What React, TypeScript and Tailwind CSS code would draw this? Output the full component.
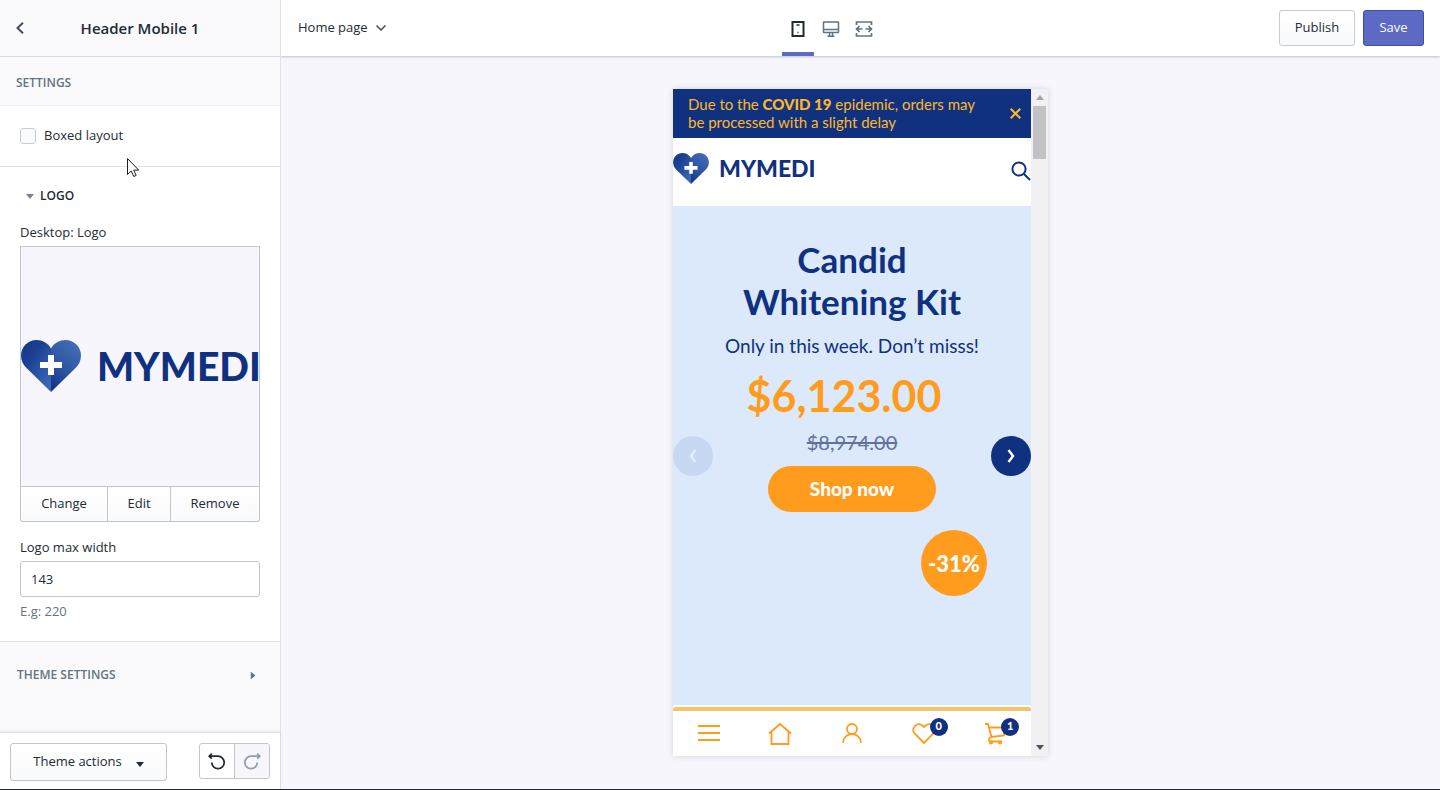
import type { ReactNode } from "react";
import { useState } from "react";
import { clsx } from "clsx";

function HeartMark({ id, className }: { id: string; className: string }) {
  return (
    <svg viewBox="0 0 60 52" className={className} aria-hidden="true">
      <defs>
        <linearGradient id={`${id}-left`} x1="0" y1="0" x2="0.8" y2="1">
          <stop offset="0" stopColor="#123687" />
          <stop offset="0.35" stopColor="#1b4092" />
          <stop offset="1" stopColor="#3d67b8" />
        </linearGradient>
        <linearGradient id={`${id}-right`} x1="0.7" y1="0" x2="0.2" y2="1">
          <stop offset="0" stopColor="#456db5" />
          <stop offset="0.6" stopColor="#2a529f" />
          <stop offset="1" stopColor="#123687" />
        </linearGradient>
      </defs>
      <path d="M30 52V8.5C27 3 21.5 0 15.5 0 7 0 0 7 0 15.5c0 5 2 9 5 12z" fill={`url(#${id}-left)`} />
      <path d="M30 52V8.5C33 3 38.5 0 44.5 0 53 0 60 7 60 15.5c0 5-2 9-5 12z" fill={`url(#${id}-right)`} />
      <path d="M27 15h6v7h8v6h-8v7h-6v-7h-8v-6h8z" fill="#fff" />
    </svg>
  );
}

function PhoneIcon() {
  return (
    <svg width="14" height="18" viewBox="0 0 14 18" fill="none" aria-hidden="true">
      <rect x="1.5" y="2" width="11" height="14" stroke="#212b36" strokeWidth="2" />
      <path d="M5.5 5h3M6.5 12.5h1" stroke="#212b36" strokeWidth="1.5" />
    </svg>
  );
}

function DesktopIcon() {
  return (
    <svg width="18" height="18" viewBox="0 0 18 18" fill="none" stroke="#637381" strokeWidth="1.5" aria-hidden="true">
      <rect x="1.5" y="2" width="15" height="10.5" rx="0.5" />
      <path d="M1.5 9.5h15M7.5 12.5v3.5M10.5 12.5v3.5M5.5 16.25h7" />
    </svg>
  );
}

function FullWidthIcon() {
  return (
    <svg width="18" height="18" viewBox="0 0 18 18" fill="none" stroke="#637381" strokeWidth="1.7" aria-hidden="true">
      <path d="M1.5 5V2h15v3M1.5 13v3h15v-3M7.5 9h-6M10.5 9h6M4.5 6L1.5 9l3 3M13.5 6l3 3-3 3" />
    </svg>
  );
}

function UndoIcon({ flipped = false }: { flipped?: boolean }) {
  return (
    <svg width="18" height="18" viewBox="0 0 18 18" fill="none" stroke="currentColor" strokeWidth="1.8" className={clsx(flipped && "-scale-x-100")} aria-hidden="true">
      <path d="M1.5 4.2H10a6.2 6.2 0 1 1-6.2 6.2" />
      <path d="M3.8 1.7L1.3 4.2l2.5 2.5" />
    </svg>
  );
}

function Caret({ className }: { className: string }) {
  return (
    <svg width="8" height="5" viewBox="0 0 8 5" fill="currentColor" className={className} aria-hidden="true">
      <path d="M0 0h8L4 5z" />
    </svg>
  );
}

function TopBar() {
  const [device, setDevice] = useState("Mobile");
  const devices = [
    { name: "Mobile", icon: <PhoneIcon /> },
    { name: "Desktop", icon: <DesktopIcon /> },
    { name: "Full width", icon: <FullWidthIcon /> },
  ];

  return (
    <header className="grid h-14 grid-cols-[1fr_auto_1fr] bg-white pr-4 pl-[17px] shadow-[0_1px_2px_rgba(33,43,54,0.25)]">
      <button type="button" className="flex items-center gap-2 justify-self-start">
        Home page
        <svg width="10" height="6" viewBox="0 0 10 6" fill="none" stroke="#454f5b" strokeWidth="1.5" aria-hidden="true">
          <path d="M0.5 0.5L5 5l4.5-4.5" />
        </svg>
      </button>
      <div className="flex gap-px pr-15">
        {devices.map(({ name, icon }) => (
          <button
            key={name}
            type="button"
            aria-label={name}
            aria-pressed={device === name}
            onClick={() => setDevice(name)}
            className={clsx(
              "flex w-8 items-center justify-center border-b-4 pt-1.5",
              device === name ? "border-[#5c6ac4]" : "border-transparent",
            )}
          >
            {icon}
          </button>
        ))}
      </div>
      <div className="flex items-center gap-2 justify-self-end">
        <button type="button" className="h-9 w-[76px] rounded-[3px] border border-[#c4cdd5] bg-linear-to-b from-white to-[#f9fafb]">
          Publish
        </button>
        <button type="button" className="h-9 w-[61px] rounded-[3px] border border-[#3f4eae] bg-[#5c6ac4] text-white">
          Save
        </button>
      </div>
    </header>
  );
}

function Sidebar() {
  return (
    <aside className="relative flex w-[281px] shrink-0 flex-col border-r border-[#dfe3e8] bg-white">
      <div className="grid h-[57px] grid-cols-[40px_1fr_40px] items-center border-b border-[#d8dde4] bg-[#fafafd]">
        <button type="button" aria-label="Back" className="flex h-full items-center pl-4">
          <svg width="8" height="12" viewBox="0 0 8 12" fill="none" stroke="#454f5b" strokeWidth="2" aria-hidden="true">
            <path d="M7 0.8L1.5 6 7 11.2" />
          </svg>
        </button>
        <h1 className="text-center text-[15px] font-semibold">Header Mobile 1</h1>
      </div>

      <h2 className="flex h-[49px] items-center border-b border-[#ebeef3] bg-[#fafafd] pt-1 pl-4 text-xs font-semibold text-[#637381]">
        SETTINGS
      </h2>

      <div className="flex h-[61px] items-center border-b border-[#dfe3e8] px-5">
        <label className="flex items-center gap-2">
          <input type="checkbox" className="size-4 appearance-none rounded-[3px] border border-[#c4cdd5] bg-[#fafbfc] checked:bg-[#5c6ac4]" />
          Boxed layout
        </label>
      </div>

      <section className="flex flex-col border-b border-[#dfe3e8] px-5 pt-[19px] pb-5">
        <button type="button" className="flex h-5 items-center gap-1.5 pl-1.5 text-xs font-semibold">
          <Caret className="text-[#7a838f]" />
          LOGO
        </button>

        <p className="mt-4 leading-5">Desktop: Logo</p>
        <div className="mt-1 flex h-[241px] items-center overflow-hidden border border-[#c4c4cb] bg-[#f6f6fc] pb-0.5">
          <HeartMark id="thumb" className="h-[52px] w-[60px] shrink-0" />
          <span className="ml-4 font-['Lato',sans-serif] text-[39px] leading-[52px] font-black text-[#10317f]">MYMEDI</span>
        </div>
        <div className="flex h-[35px] divide-x divide-[#c4c4cb] rounded-b-[3px] border border-t-0 border-[#c4c4cb] bg-linear-to-b from-white to-[#f9fafb]">
          <button type="button" className="w-[87px]">Change</button>
          <button type="button" className="w-[63px]">Edit</button>
          <button type="button" className="flex-1">Remove</button>
        </div>

        <label htmlFor="logo-width" className="mt-[15px] leading-5">
          Logo max width
        </label>
        <input id="logo-width" defaultValue="143" className="mt-1 h-9 w-full rounded-[3px] border border-[#c4c4cb] px-2.5" />
        <p className="mt-1 leading-5 text-[#637381]">E.g: 220</p>
      </section>

      <div className="flex-1 bg-[#fafafd] pt-[23px]">
        <button type="button" className="flex h-5 w-full items-center justify-between pr-[23px] pl-[17px] text-xs font-semibold text-[#637381]">
          THEME SETTINGS
          <Caret className="-rotate-90" />
        </button>
      </div>

      <footer className="flex h-[57px] items-start justify-between border-t border-[#dfe3e8] px-2.5 pt-2.5 shadow-[0_-1px_3px_rgba(33,43,54,0.08)]">
        <button type="button" className="flex h-[38px] w-[157px] items-center justify-center gap-3.5 rounded-[3px] border border-[#c4c4cb] bg-linear-to-b from-white to-[#f9fafb]">
          Theme actions
          <Caret className="mt-1" />
        </button>
        <div className="flex h-9 divide-x divide-[#c4c4cb] overflow-hidden rounded-[3px] border border-[#c4c4cb]">
          <button type="button" aria-label="Undo" className="flex w-[35px] items-center justify-center">
            <UndoIcon />
          </button>
          <button type="button" aria-label="Redo" disabled className="flex w-[34px] items-center justify-center bg-[#f6f6fc] text-[#919eab]">
            <UndoIcon flipped />
          </button>
        </div>
      </footer>

      <svg width="12" height="20" viewBox="0 0 12 20" className="absolute top-[158px] left-[127px]" aria-hidden="true">
        <path d="M0.5 0.5v16l3.7-3.5 2.6 5.5 2.4-1.1-2.5-5.3h5z" fill="#fff" stroke="#1c1c2b" />
      </svg>
    </aside>
  );
}

function NavItem({ label, count, children }: { label: string; count?: number; children: ReactNode }) {
  return (
    <a href="#" aria-label={label} className="flex flex-1 items-center justify-center">
      <span className="relative">
        <svg width="24" height="24" viewBox="0 0 24 24" fill="none" stroke="#ff9c1e" strokeWidth="1.8" aria-hidden="true">
          {children}
        </svg>
        {count !== undefined ? (
          <span className="absolute -top-1 -right-3 flex size-[18px] items-center justify-center rounded-full bg-[#10317f] text-[11px] font-black text-white">
            {count}
          </span>
        ) : null}
      </span>
    </a>
  );
}

function ArrowIcon({ direction }: { direction: "left" | "right" }) {
  return (
    <svg width="8" height="14" viewBox="0 0 8 14" fill="none" stroke="currentColor" strokeWidth="2.4" aria-hidden="true">
      <path d={direction === "left" ? "M6.5 1L2 7l4.5 6" : "M1.5 1L6 7l-4.5 6"} />
    </svg>
  );
}

function StorePreview() {
  return (
    <div className="flex h-[667px] w-[375px] bg-white font-['Lato',sans-serif] text-[#10317f] shadow-[0_0_6px_rgba(33,43,54,0.16)]">
      <div className="flex min-w-0 flex-1 flex-col">
        <div className="flex h-[49px] items-center justify-between bg-[#10317f] pr-2.5 pl-[15px] text-[#fdb827]">
          <p className="w-[296px] pb-0.5 text-[15px] leading-[18px]">
            Due to the <strong className="font-black">COVID 19</strong> epidemic, orders may be processed with a slight delay
          </p>
          <button type="button" aria-label="Dismiss">
            <svg width="11" height="11" viewBox="0 0 11 11" stroke="currentColor" strokeWidth="2" aria-hidden="true">
              <path d="M0.7 0.7l9.6 9.6M10.3 0.7L0.7 10.3" />
            </svg>
          </button>
        </div>

        <div className="flex h-[68px] items-start justify-between pt-[15px]">
          <a href="#" className="flex items-center">
            <HeartMark id="store" className="h-[31px] w-9" />
            <span className="ml-2.5 text-[23px] leading-[31px] font-black">MYMEDI</span>
          </a>
          <button type="button" aria-label="Search" className="mt-2">
            <svg width="20" height="20" viewBox="0 0 20 20" fill="none" stroke="currentColor" strokeWidth="2" aria-hidden="true">
              <circle cx="8" cy="8" r="6.6" />
              <path d="M13 13l6 6" />
            </svg>
          </button>
        </div>

        <div className="relative flex flex-1 flex-col items-center bg-[#dbe9fb] pt-8">
          <h2 className="w-[240px] text-center text-[35px] leading-[42px] font-bold">Candid Whitening Kit</h2>
          <p className="mt-2.5 text-[19px] leading-7">Only in this week. Don’t misss!</p>
          <p className="mt-3 pr-4 text-[43px] leading-12 font-bold text-[#ff9c1e]">$6,123.00</p>
          <del className="mt-2 text-xl leading-7 text-[#62719b]">$8,974.00</del>
          <button type="button" className="mt-2.5 h-[46px] w-[168px] rounded-full bg-[#ff9c1e] text-[19px] font-black text-white">
            Shop now
          </button>
          <span className="mt-[18px] mr-11 flex size-[66px] items-center justify-center self-end rounded-full bg-[#ff9c1e] text-[22px] font-black text-white">
            -31%
          </span>
          <button type="button" aria-label="Previous slide" className="absolute top-[230px] left-0 flex size-10 items-center justify-center rounded-full bg-[#c7d8f2] text-[#e3eefc]">
            <ArrowIcon direction="left" />
          </button>
          <button type="button" aria-label="Next slide" className="absolute top-[230px] right-0 flex size-10 items-center justify-center rounded-full bg-[#10317f] text-white">
            <ArrowIcon direction="right" />
          </button>
        </div>

        <nav className="mt-0.5 flex h-[49px] rounded-t-[3px] border-t-4 border-[#f5c469]">
          <NavItem label="Menu">
            <path d="M1 4h22M1 11h22M1 18h22" />
          </NavItem>
          <NavItem label="Home">
            <path d="M1 11.500L12 2l11 9.500M3.500 9.500V22h17V9.500" />
          </NavItem>
          <NavItem label="Account">
            <circle cx="12" cy="7" r="5" />
            <path d="M3 21c0-5 4-9 9-9s9 4 9 9" />
          </NavItem>
          <NavItem label="Wishlist" count={0}>
            <path d="M12 21L2.600 11.500C-1 7 4-0.500 10 3.300l2 1.700 2-1.700c6-3.800 11 3.700 7.400 8.200z" />
          </NavItem>
          <NavItem label="Cart" count={1}>
            <path d="M2 2h3l3.500 13L21 13.500 23 5.500H6M8.500 15c-3 0.500-3.500 4.500-0.500 4.500h11" />
            <circle cx="8" cy="20.500" r="1.200" />
            <circle cx="17" cy="20.500" r="1.200" />
          </NavItem>
        </nav>
      </div>

      <div className="flex w-[17px] flex-col items-center bg-[#f1f1f4] py-1.5" aria-hidden="true">
        <Caret className="rotate-180 text-[#a3a3a8]" />
        <span className="mt-1.5 h-[53px] w-[13px] bg-[#c1c1c6]" />
        <Caret className="mt-auto text-[#505060]" />
      </div>
    </div>
  );
}

export default function App() {
  return (
    <div className="flex min-h-screen border-b border-[#212b36] bg-[#f6f6fc] font-['Open_Sans',sans-serif] text-[13px] text-[#212b36]">
      <Sidebar />
      <div className="flex min-w-0 flex-1 flex-col">
        <TopBar />
        <main className="flex flex-1 justify-center pt-[33px] pb-8">
          <StorePreview />
        </main>
      </div>
    </div>
  );
}
